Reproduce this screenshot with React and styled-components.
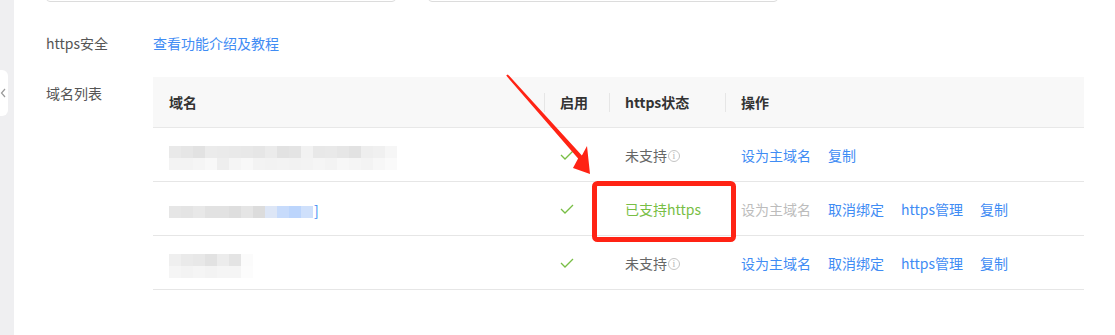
import React from "react";
import styled, { createGlobalStyle } from "styled-components";

const GlobalStyle = createGlobalStyle`
  html, body {
    margin: 0;
    padding: 0;
    background: #fff;
    overflow: hidden;
  }
  body {
    font-family: "Noto Sans CJK SC", "Noto Sans", sans-serif;
    font-size: 14px;
    color: #333;
  }
`;

const BLUE = "#3f8cf4";
const GREEN = "#78be45";

const domains = [
  {
    blur: [
      ["#e9e9e9", "#e6e6e6", "#e2e2e2", "#ebebeb", "#eaeaea", "#e9e9e9", "#e8e8e8", "#e6e6e6", "#ebebeb", "#e2e2e2", "#e4e4e4", "#f2f2f2", "#e8e8e8", "#e9e9e9", "#e6e6e6", "#e2e2e2", "#eeeeee", "#f0f0f0", "#f6f6f6"],
      ["#f3f3f3", "#f3f3f3", "#f5f5f5", "#f8f8f8", "#eeeeee", "#f5f5f5", "#f8f8f8", "#f3f3f3", "#f2f2f2", "#f3f3f3", "#f2f2f2", "#f3f3f3", "#f5f5f5", "#f3f3f3", "#f7f7f7", "#f5f5f5", "#f3f3f3", "#f7f7f7", "#fafafa"],
    ],
    on: true,
    https: false,
    main: true,
    actions: ["复制"],
  },
  {
    blur: [
      ["#e6e6e6", "#e4e4e4", "#e8e8e8", "#e2e2e2", "#e2e2e2", "#dedede", "#e5e5e5", "#dcdcdc", "#dde6f6", "#c7dbfb", "#bcd5fc", "#cfe0fb"],
    ],
    tail: "]",
    on: true,
    https: true,
    main: false,
    actions: ["取消绑定", "https管理", "复制"],
  },
  {
    blur: [
      ["#efefef", "#eaeaea", "#e8e8e8", "#e2e2e2", "#ececec", "#e4e4e4", "#fbfbfb"],
      ["#f5f5f5", "#f3f3f3", "#f5f5f5", "#f3f3f3", "#f5f5f5", "#f5f5f5", "#fcfcfc"],
    ],
    on: true,
    https: false,
    main: true,
    actions: ["取消绑定", "https管理", "复制"],
  },
];

export default function App() {
  return (
    <Page>
      <GlobalStyle />
      <SideRail>
        <CollapseTab>
          <svg width="6" height="10" viewBox="0 0 6 10">
            <polyline points="5,1 1.5,5 5,9" fill="none" stroke="#9a9a9a" strokeWidth="1.2" />
          </svg>
        </CollapseTab>
      </SideRail>

      <Main>
        <InputRow>
          <FakeInput />
          <FakeInput />
        </InputRow>

        <FormItem>
          <Label>https安全</Label>
          <LinkText>查看功能介绍及教程</LinkText>
        </FormItem>

        <FormItem $gap="18px">
          <Label>域名列表</Label>
          <Table>
            <HeadCell>域名</HeadCell>
            <HeadCell $divider>启用</HeadCell>
            <HeadCell $divider>https状态</HeadCell>
            <HeadCell $divider>操作</HeadCell>

            {domains.map((d, i) => (
              <React.Fragment key={i}>
                <Cell>
                  <Mosaic>
                    {d.blur.map((row, r) => (
                      <MosaicRow key={r}>
                        {row.map((c, k) => (
                          <MosaicCell key={k} $c={c} />
                        ))}
                      </MosaicRow>
                    ))}
                  </Mosaic>
                  {d.tail && <Tail>{d.tail}</Tail>}
                </Cell>
                <Cell>
                  {d.on && (
                    <svg width="14" height="10" viewBox="0 0 14 10">
                      <polyline points="1,5 5,9 13,1" fill="none" stroke={GREEN} strokeWidth="1.3" />
                    </svg>
                  )}
                </Cell>
                <Cell>
                  {d.https ? (
                    <Status $ok>已支持https</Status>
                  ) : (
                    <Status>
                      未支持
                      <InfoIcon>i</InfoIcon>
                    </Status>
                  )}
                </Cell>
                <Cell>
                  <Action $disabled={!d.main}>设为主域名</Action>
                  {d.actions.map((a) => (
                    <Action key={a}>{a}</Action>
                  ))}
                </Cell>
              </React.Fragment>
            ))}
          </Table>
        </FormItem>
      </Main>

      <Annotation width="1115" height="335" viewBox="0 0 1115 335">
        <polygon
          points="507.8,74.4 581.9,155.4 587,146 590,174 573,168 578.1,158.6 506.2,75.6"
          fill="#ff2314"
        />
        <rect x="594.5" y="183.5" width="139" height="56" rx="3" fill="none" stroke="#ff2314" strokeWidth="5" />
      </Annotation>
    </Page>
  );
}

const Page = styled.div`
  position: relative;
  display: flex;
  width: 1115px;
  height: 335px;
  overflow: hidden;
`;

const SideRail = styled.div`
  width: 14px;
  flex-shrink: 0;
  background: #efeff1;
  padding-top: 70px;
`;

const CollapseTab = styled.div`
  width: 8px;
  height: 46px;
  background: #fff;
  border-radius: 0 6px 6px 0;
  display: flex;
  align-items: center;
  justify-content: flex-start;
`;

const Main = styled.div`
  flex: 1;
  padding-left: 32px;
  margin-top: -30px;
`;

const InputRow = styled.div`
  display: flex;
  gap: 32px;
`;

const FakeInput = styled.div`
  width: 350px;
  height: 32px;
  box-sizing: border-box;
  border: 1px solid #dcdcdc;
  border-radius: 4px;
`;

const FormItem = styled.div`
  display: flex;
  align-items: flex-start;
  margin-top: ${(p) => p.$gap || "25px"};
`;

const Label = styled.div`
  width: 107px;
  flex-shrink: 0;
  line-height: 32px;
  color: #555;
`;

const LinkText = styled.a`
  line-height: 32px;
  color: ${BLUE};
  cursor: pointer;
`;

const Table = styled.div`
  width: 931px;
  display: grid;
  grid-template-columns: 391px 65px 116px 1fr;
`;

const HeadCell = styled.div`
  position: relative;
  height: 50px;
  background: #f8f8f8;
  border-bottom: 1px solid #e8e8e8;
  display: flex;
  align-items: center;
  padding-left: 16px;
  font-weight: 600;
  color: #333;

  &::before {
    content: "";
    display: ${(p) => (p.$divider ? "block" : "none")};
    position: absolute;
    left: 0;
    top: 16px;
    height: 19px;
    border-left: 1px solid #e6e6e6;
  }
`;

const Cell = styled.div`
  height: 53px;
  border-bottom: 1px solid #e6e6e6;
  display: flex;
  align-items: center;
  padding-left: 16px;
`;

const Mosaic = styled.div`
  display: flex;
  flex-direction: column;
  margin-top: 6px;
  filter: blur(0.4px);
`;

const MosaicRow = styled.div`
  display: flex;
`;

const MosaicCell = styled.div`
  width: 12px;
  height: 12px;
  background: ${(p) => p.$c};
`;

const Tail = styled.span`
  color: ${BLUE};
  margin-left: 1px;
  margin-top: 2px;
`;

const Status = styled.span`
  display: flex;
  align-items: center;
  color: ${(p) => (p.$ok ? GREEN : "#666")};
`;

const InfoIcon = styled.span`
  width: 12px;
  height: 12px;
  margin-left: 1px;
  margin-top: 2px;
  box-sizing: border-box;
  border: 1px solid #c4c4c4;
  border-radius: 50%;
  color: #b8b8b8;
  font-family: "Liberation Serif", serif;
  font-size: 10px;
  line-height: 10px;
  text-align: center;
`;

const Action = styled.span`
  margin-right: 17px;
  color: ${(p) => (p.$disabled ? "#bcbcbc" : BLUE)};
  cursor: ${(p) => (p.$disabled ? "default" : "pointer")};
`;

const Annotation = styled.svg`
  position: absolute;
  left: 0;
  top: 0;
  pointer-events: none;
`;
